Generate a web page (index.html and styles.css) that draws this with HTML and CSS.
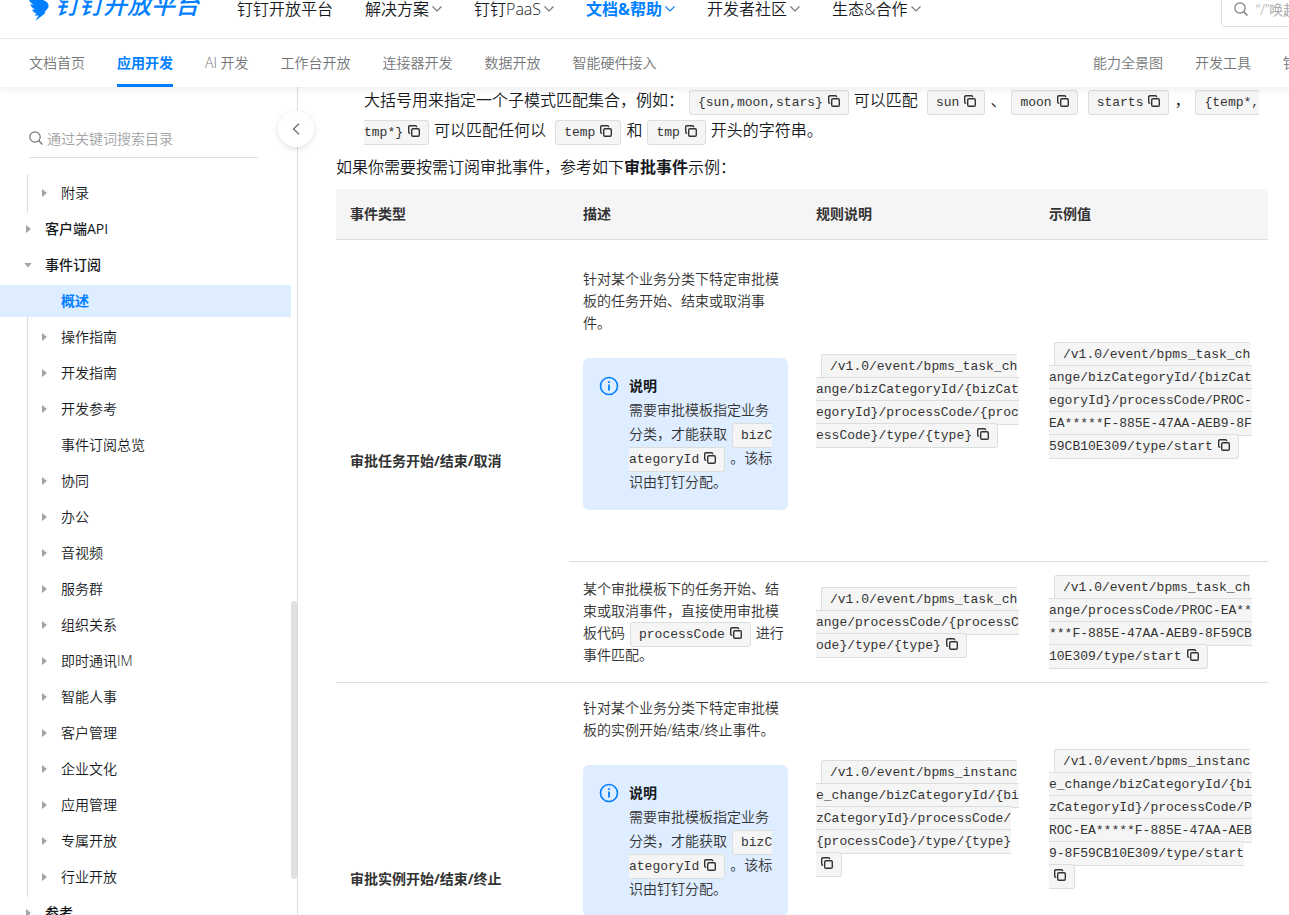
FILE: index.html
```
<!DOCTYPE html>
<html lang="zh-CN">
<head>
<meta charset="utf-8">
<title>事件订阅概述 - 钉钉开放平台</title>
<link rel="stylesheet" href="styles.css">
</head>
<body>
<svg class="sprite" aria-hidden="true">
  <symbol id="copy" viewBox="0 0 12 12"><path d="M2.2 8.2H1.9A1.2 1.2 0 0 1 .7 7V1.9A1.2 1.2 0 0 1 1.9.7H7.4A1.2 1.2 0 0 1 8.6 1.9V2.2" fill="none" stroke="currentColor" stroke-width="1.4"/><rect x="3.7" y="3.7" width="7.6" height="7.6" rx="1.2" fill="none" stroke="currentColor" stroke-width="1.4"/></symbol>
  <symbol id="down" viewBox="0 0 10 6"><path d="M.5.5 5 5 9.5.5" fill="none" stroke="currentColor" stroke-width="1.1"/></symbol>
  <symbol id="search" viewBox="0 0 14 14"><circle cx="6" cy="6" r="5.2" fill="none" stroke="currentColor" stroke-width="1.2"/><path d="m9.8 9.8 3.6 3.6" stroke="currentColor" stroke-width="1.4"/></symbol>
  <symbol id="info" viewBox="0 0 20 20"><circle cx="10" cy="10" r="8.5" fill="none" stroke="currentColor" stroke-width="1.6"/><path d="M10 8.5V14.5M10 5.3V7" stroke="currentColor" stroke-width="1.8"/></symbol>
</svg>
<div class="app">
  <header class="header">
    <div class="topbar">
      <a class="logo" href="#">
        <svg class="logo-mark" viewBox="0 -2 22 34" aria-hidden="true"><path d="M.8 1C4 6.500 12 8.500 17 11.500 19.500 13 20 15.500 19.200 17.800L15.200 22.800H16.800L6.300 31 9.600 25.500H5.300L7.600 23.400C5.300 23 3.800 21.700 3.200 19.500L6.400 19.400C3.500 18.200 1.800 16.400 1.200 14.200L4.800 14.900C2 13.300.3 11.500 0 9.700L3.500 10.300C1.500 8.500.3 5 .8 1Z" fill="#007fff"/></svg>
        <span>钉钉开放平台</span>
      </a>
      <nav class="mainnav" aria-label="主导航">
        <a href="#">钉钉开放平台</a>
        <a href="#">解决方案<svg class="down"><use href="#down"/></svg></a>
        <a href="#">钉钉PaaS<svg class="down"><use href="#down"/></svg></a>
        <a class="on" href="#">文档&amp;帮助<svg class="down"><use href="#down"/></svg></a>
        <a href="#">开发者社区<svg class="down"><use href="#down"/></svg></a>
        <a href="#">生态&amp;合作<svg class="down"><use href="#down"/></svg></a>
      </nav>
      <label class="topsearch"><svg class="search-icon"><use href="#search"/></svg><input type="text" aria-label="搜索" placeholder="“/”唤起搜索"></label>
    </div>
    <nav class="subnav" aria-label="文档导航">
      <a href="#">文档首页</a>
      <a class="on" href="#">应用开发</a>
      <a href="#">AI 开发</a>
      <a href="#">工作台开放</a>
      <a href="#">连接器开发</a>
      <a href="#">数据开放</a>
      <a href="#">智能硬件接入</a>
      <a class="push" href="#">能力全景图</a>
      <a href="#">开发工具</a>
      <a href="#">钉钉</a>
    </nav>
  </header>
  <div class="body">
    <aside class="sidebar">
      <label class="sidesearch"><svg class="search-icon"><use href="#search"/></svg><input type="text" aria-label="搜索目录" placeholder="通过关键词搜索目录"></label>
      <div class="tree">
        <ul class="branch first">
          <li><a class="fold" href="#">附录</a></li>
        </ul>
        <ul class="roots">
          <li><a class="fold" href="#">客户端API</a></li>
          <li><a class="fold open" href="#">事件订阅</a></li>
        </ul>
        <ul class="branch">
          <li><a class="on" href="#">概述</a></li>
          <li><a class="fold" href="#">操作指南</a></li>
          <li><a class="fold" href="#">开发指南</a></li>
          <li><a class="fold" href="#">开发参考</a></li>
          <li><a href="#">事件订阅总览</a></li>
          <li><a class="fold" href="#">协同</a></li>
          <li><a class="fold" href="#">办公</a></li>
          <li><a class="fold" href="#">音视频</a></li>
          <li><a class="fold" href="#">服务群</a></li>
          <li><a class="fold" href="#">组织关系</a></li>
          <li><a class="fold" href="#">即时通讯IM</a></li>
          <li><a class="fold" href="#">智能人事</a></li>
          <li><a class="fold" href="#">客户管理</a></li>
          <li><a class="fold" href="#">企业文化</a></li>
          <li><a class="fold" href="#">应用管理</a></li>
          <li><a class="fold" href="#">专属开放</a></li>
          <li><a class="fold" href="#">行业开放</a></li>
        </ul>
        <ul class="roots">
          <li><a class="fold" href="#">参考</a></li>
        </ul>
      </div>
      <div class="thumb"></div>
      <button class="collapse" aria-label="收起目录"><svg viewBox="0 0 8 12"><path d="M7 .7 1.500 6 7 11.300" fill="none" stroke="currentColor" stroke-width="1.400"/></svg></button>
    </aside>
    <main class="main">
      <p class="lead item">大括号用来指定一个子模式匹配集合，例如：<code>{sun,moon,stars}<button class="copy" aria-label="复制"><svg><use href="#copy"/></svg></button></code>可以匹配 <code>sun<button class="copy" aria-label="复制"><svg><use href="#copy"/></svg></button></code>、<code>moon<button class="copy" aria-label="复制"><svg><use href="#copy"/></svg></button></code><code>starts<button class="copy" aria-label="复制"><svg><use href="#copy"/></svg></button></code>，<code>{temp*,<wbr>tmp*}<button class="copy" aria-label="复制"><svg><use href="#copy"/></svg></button></code>可以匹配任何以 <code>temp<button class="copy" aria-label="复制"><svg><use href="#copy"/></svg></button></code>和<code>tmp<button class="copy" aria-label="复制"><svg><use href="#copy"/></svg></button></code>开头的字符串。</p>
      <p class="lead">如果你需要按需订阅审批事件，参考如下<strong>审批事件</strong>示例：</p>
      <table class="events">
        <thead>
          <tr><th>事件类型</th><th>描述</th><th>规则说明</th><th>示例值</th></tr>
        </thead>
        <tbody>
          <tr>
            <th rowspan="2">审批任务开始/结束/取消</th>
            <td>
              <div class="spaced">
                <p>针对某个业务分类下特定审批模板的任务开始、结束或取消事件。</p>
                <div class="note"><svg class="info"><use href="#info"/></svg><div><b>说明</b><p>需要审批模板指定业务分类，才能获取<code>bizCategoryId<button class="copy" aria-label="复制"><svg><use href="#copy"/></svg></button></code>。该标识由钉钉分配。</p></div></div>
              </div>
            </td>
            <td class="path"><code>/v1.0/event/bpms_task_change/bizCategoryId/{bizCategoryId}/processCode/{processCode}/type/{type}<button class="copy" aria-label="复制"><svg><use href="#copy"/></svg></button></code></td>
            <td class="path"><code>/v1.0/event/bpms_task_change/bizCategoryId/{bizCategoryId}/processCode/PROC-EA*****F-885E-47AA-AEB9-8F59CB10E309/type/start<button class="copy" aria-label="复制"><svg><use href="#copy"/></svg></button></code></td>
          </tr>
          <tr>
            <td>某个审批模板下的任务开始、结束或取消事件，直接使用审批模板代码<code>processCode<button class="copy" aria-label="复制"><svg><use href="#copy"/></svg></button></code>进行事件匹配。</td>
            <td class="path"><code>/v1.0/event/bpms_task_change/processCode/{processCode}/type/{type}<button class="copy" aria-label="复制"><svg><use href="#copy"/></svg></button></code></td>
            <td class="path"><code>/v1.0/event/bpms_task_change/processCode/PROC-EA*****F-885E-47AA-AEB9-8F59CB10E309/type/start<button class="copy" aria-label="复制"><svg><use href="#copy"/></svg></button></code></td>
          </tr>
          <tr>
            <th rowspan="2">审批实例开始/结束/终止</th>
            <td>
              <p>针对某个业务分类下特定审批模板的实例开始/结束/终止事件。</p>
              <div class="note"><svg class="info"><use href="#info"/></svg><div><b>说明</b><p>需要审批模板指定业务分类，才能获取<code>bizCategoryId<button class="copy" aria-label="复制"><svg><use href="#copy"/></svg></button></code>。该标识由钉钉分配。</p></div></div>
            </td>
            <td class="path"><code>/v1.0/event/bpms_instance_change/bizCategoryId/{bizCategoryId}/processCode/{processCode}/type/{type}<button class="copy" aria-label="复制"><svg><use href="#copy"/></svg></button></code></td>
            <td class="path"><code>/v1.0/event/bpms_instance_change/bizCategoryId/{bizCategoryId}/processCode/PROC-EA*****F-885E-47AA-AEB9-8F59CB10E309/type/start<button class="copy" aria-label="复制"><svg><use href="#copy"/></svg></button></code></td>
          </tr>
          <tr>
            <td>某个审批模板下的实例开始、结束或终止事件，直接使用审批模板代码<code>processCode<button class="copy" aria-label="复制"><svg><use href="#copy"/></svg></button></code>进行事件匹配。</td>
            <td class="path"><code>/v1.0/event/bpms_instance_change/processCode/{processCode}/type/{type}<button class="copy" aria-label="复制"><svg><use href="#copy"/></svg></button></code></td>
            <td class="path"><code>/v1.0/event/bpms_instance_change/processCode/PROC-EA*****F-885E-47AA-AEB9-8F59CB10E309/type/start<button class="copy" aria-label="复制"><svg><use href="#copy"/></svg></button></code></td>
          </tr>
        </tbody>
      </table>
    </main>
  </div>
</div>
</body>
</html>
```

FILE: styles.css
```
* { box-sizing: border-box; }
body {
  margin: 0;
  font-family: "Open Sans", "Noto Sans CJK SC", sans-serif;
  font-size: 14px;
  font-weight: 350;
  color: #171a1d;
  background: #fff;
}
a { color: inherit; text-decoration: none; }
p, ul { margin: 0; padding: 0; }
ul { list-style: none; }
button { font: inherit; border: 0; padding: 0; background: none; color: inherit; cursor: pointer; }
input { font: inherit; border: 0; padding: 0; background: none; outline: 0; min-width: 0; flex: 1; }
input::placeholder { color: #a2a3a5; opacity: 1; }
.sprite { position: absolute; width: 0; height: 0; }

.app { height: 100vh; display: flex; flex-direction: column; overflow: hidden; }

/* Header: the top bar is partly scrolled out of view */
.header {
  position: relative;
  z-index: 2;
  flex: none;
  margin-top: -20px;
  min-width: 1340px;
  background: #fff;
  box-shadow: 0 2px 8px rgba(0, 0, 0, .08);
}
.topbar {
  display: flex;
  align-items: center;
  height: 59px;
  padding: 0 29px;
  border-bottom: 1px solid #e5e8eb;
}
.logo {
  display: flex;
  align-items: center;
  gap: 4px;
  flex: none;
  width: 208px;
  height: 42px;
  align-self: flex-start;
  padding-top: 8px;
  color: #007fff;
  font-size: 24px;
  font-weight: 500;
  font-style: italic;
  line-height: 32px;
  white-space: nowrap;
}
.logo-mark { width: 22px; height: 34px; flex: none; }
.mainnav { display: flex; gap: 32px; margin-right: auto; font-size: 16px; line-height: 24px; white-space: nowrap; }
.mainnav a { display: flex; align-items: center; gap: 3px; }
.mainnav .on { color: #007fff; font-weight: 700; }
.down { width: 10px; height: 6px; color: #747677; }
.on .down { color: #007fff; }
.topsearch {
  display: flex;
  align-items: center;
  gap: 8px;
  flex: none;
  width: 90px;
  height: 36px;
  padding-left: 12px;
  border: 1px solid #dcdddd;
  border-radius: 3px;
}
.search-icon { width: 14px; height: 14px; flex: none; color: #747677; }
.subnav {
  display: flex;
  gap: 32px;
  height: 48px;
  padding: 0 29px;
  line-height: 48px;
  color: #747677;
  white-space: nowrap;
}
.subnav .on { color: #007fff; font-weight: 700; box-shadow: inset 0 -3px #007fff; }
.subnav .push { margin-left: auto; }

.body { display: flex; flex: 1; min-height: 0; }

/* Sidebar */
.sidebar {
  position: relative;
  flex: none;
  width: 298px;
  display: flex;
  flex-direction: column;
  border-right: 1px solid #dcdddd;
}
.sidesearch {
  display: flex;
  align-items: center;
  gap: 4px;
  flex: none;
  margin: 32px 39px 16px 29px;
  height: 39px;
  border-bottom: 1px solid #dcdddd;
}
.tree { flex: 1; min-height: 0; overflow: hidden; margin-right: 6px; line-height: 20px; }
.tree a { display: flex; align-items: center; height: 32px; padding-left: 61px; }
.tree li { padding-bottom: 4px; }
.branch { background: linear-gradient(#dcdddd, #dcdddd) 27px 0 / 1px 100% no-repeat; }
.first { padding-top: 3px; }
.roots { font-weight: 500; }
.tree .roots a { padding-left: 45px; }
.tree .fold { padding-left: 42px; }
.tree .roots .fold { padding-left: 26px; }
.fold::before {
  content: "";
  width: 5px;
  height: 8px;
  margin-right: 14px;
  background: #a2a3a5;
  clip-path: polygon(0 0, 100% 50%, 0 100%);
}
.tree .roots .open { padding-left: 24px; }
.open::before { width: 8px; height: 5px; margin-right: 13px; clip-path: polygon(0 0, 100% 0, 50% 100%); }
.tree .on { background: #deedff; color: #007fff; font-weight: 700; }
.thumb { position: absolute; right: 0; top: 514px; width: 6px; height: 278px; border-radius: 3px; background: #dfe0e1; }
.collapse {
  position: absolute;
  right: -17px;
  top: 24px;
  width: 36px;
  height: 36px;
  border-radius: 50%;
  background: #fff;
  color: #747677;
  box-shadow: 0 2px 6px rgba(0, 0, 0, .12);
}
.collapse svg { display: block; width: 8px; height: 12px; margin: auto; }

/* Article */
.main { flex: 1; min-width: 0; padding: 0 21px 0 38px; margin-top: -2px; overflow: hidden; }
.lead { font-size: 16px; line-height: 30px; margin-bottom: 7px; }
.item { padding-left: 28px; }
strong, b { font-weight: 700; }
code, .path {
  font-family: "Liberation Mono", "Noto Sans CJK SC", monospace;
  font-size: 13px;
  font-weight: 400;
}
code {
  line-height: 15px;
  color: #333;
  margin: 0 5px;
  padding: 4px 8px;
  border: 1px solid #dcdddd;
  border-radius: 3px;
  background: #f5f5f5;
}
.copy { width: 12px; height: 12px; margin-left: 5px; vertical-align: -1px; line-height: 12px; }
.copy svg { display: block; width: 12px; height: 12px; }

.events { width: 100%; table-layout: fixed; border-collapse: separate; border-spacing: 0; line-height: 22px; color: #333; }
.events th, .events td { padding: 14px; border-bottom: 1px solid #dcdddd; text-align: left; vertical-align: middle; }
.events th { font-weight: 700; }
.events thead th { background: #f5f5f5; }
.events td { word-break: break-all; }
.events .path { line-height: 23px; }
.spaced { padding: 14px 0; }
.note {
  display: flex;
  gap: 10px;
  margin: 24px 0 23px;
  padding: 16px 15px 16px 16px;
  border-radius: 6px;
  background: #deedff;
  line-height: 24px;
}
.note b { display: block; color: #171a1d; }
.info { width: 20px; height: 20px; flex: none; margin-top: 2px; color: #007fff; }
```
